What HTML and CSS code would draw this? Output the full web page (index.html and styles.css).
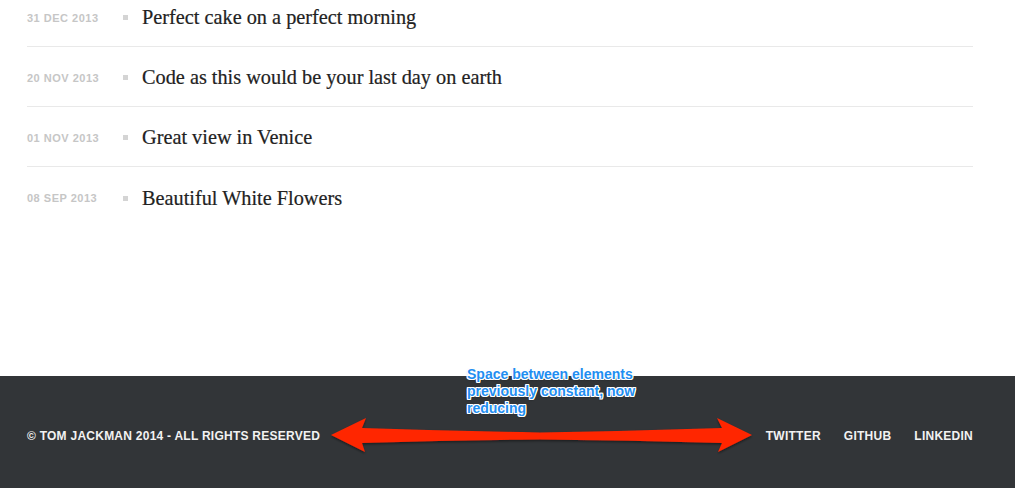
FILE: index.html
```html
<!DOCTYPE html>
<html>
<head>
<meta charset="utf-8">
<link rel="stylesheet" href="styles.css">
</head>
<body>
<main class="content">
  <ul class="posts">
    <li class="post"><span class="date">31 Dec 2013</span><span class="dot"></span><a class="title">Perfect cake on a perfect morning</a></li>
    <li class="post"><span class="date">20 Nov 2013</span><span class="dot"></span><a class="title">Code as this would be your last day on earth</a></li>
    <li class="post"><span class="date">01 Nov 2013</span><span class="dot"></span><a class="title">Great view in Venice</a></li>
    <li class="post"><span class="date">08 Sep 2013</span><span class="dot"></span><a class="title">Beautiful White Flowers</a></li>
  </ul>
</main>
<footer class="footer">
  <span class="copy">© Tom Jackman 2014 - All rights reserved</span>
  <nav class="links">
    <a>Twitter</a>
    <a>Github</a>
    <a>LinkedIn</a>
  </nav>
</footer>
<svg class="arrow" width="1015" height="488" viewBox="0 0 1015 488">
  <defs>
    <filter id="sh" x="-5%" y="-50%" width="110%" height="200%">
      <feDropShadow dx="0" dy="1.5" stdDeviation="1.2" flood-color="#000" flood-opacity="0.45"/>
    </filter>
  </defs>
  <path filter="url(#sh)" fill="#ff2600" d="M331 435 L366 418 L362 428 Q450 431 540 432.5 Q630 431 722 428 L717 418 L752 435 L718 452 L722 443 Q630 440 540 439.5 Q450 440 362 443 L365 452 Z"/>
</svg>
<div class="note">Space between elements<br>previously constant, now<br>reducing</div>
</body>
</html>
```
FILE: styles.css
```css
html, body {
  margin: 0;
  padding: 0;
  background: #fff;
  height: 488px;
  overflow: hidden;
}
body {
  position: relative;
  display: flex;
  flex-direction: column;
}
.content {
  height: 376px;
  padding: 0 42px 0 27px;
  overflow: hidden;
}
.posts {
  list-style: none;
  margin: -13px 0 0 0;
  padding: 0;
}
.post {
  display: flex;
  align-items: center;
  box-sizing: border-box;
  height: 60px;
  padding-top: 2px;
  border-bottom: 1px solid #e9e9e9;
}
.post:last-child {
  border-bottom: none;
}
.date {
  width: 96px;
  font-family: "Liberation Sans", Arial, sans-serif;
  font-weight: bold;
  font-size: 11px;
  text-transform: uppercase;
  color: #c6c6c6;
  letter-spacing: 0.5px;
}
.dot {
  width: 5px;
  height: 5px;
  background: #d4d4d4;
  margin-right: 14px;
}
.title {
  font-family: "Liberation Serif", "Times New Roman", serif;
  font-size: 20.3px;
  color: #222;
  -webkit-text-stroke: 0.2px #222;
}
.footer {
  height: 112px;
  background: #323538;
  display: flex;
  align-items: center;
  justify-content: space-between;
  padding: 7px 42px 0 27px;
  box-sizing: border-box;
  font-family: "Liberation Sans", Arial, sans-serif;
  font-weight: bold;
  font-size: 12px;
  letter-spacing: 0.25px;
  text-transform: uppercase;
  color: #f2f2f2;
}
.links {
  display: flex;
  gap: 23px;
}
.arrow {
  position: absolute;
  left: 0;
  top: 0;
  pointer-events: none;
}
.note {
  position: absolute;
  left: 467px;
  top: 366px;
  font-family: "Liberation Sans", Arial, sans-serif;
  font-weight: bold;
  font-size: 14px;
  line-height: 17px;
  color: #1f8ef1;
  text-shadow: 1px 0 0 #fff, -1px 0 0 #fff, 0 1px 0 #fff, 0 -1px 0 #fff, 1px 1px 0 #fff, -1px -1px 0 #fff, 1px -1px 0 #fff, -1px 1px 0 #fff, 0 1px 2px rgba(0,0,0,0.5);
}
```
